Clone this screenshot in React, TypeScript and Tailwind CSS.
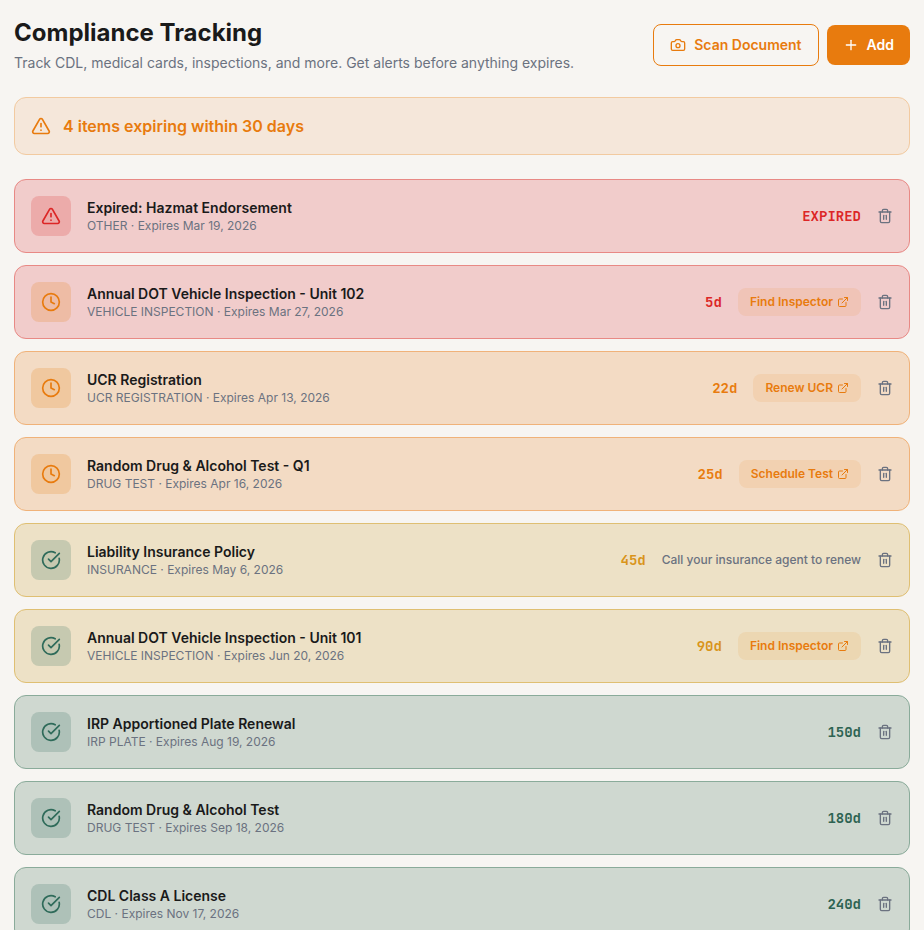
import { AlertTriangle, Camera, CircleCheckBig, Clock, ExternalLink, Plus, Trash2 } from "lucide-react";
import type { LucideIcon } from "lucide-react";

type Tone = "red" | "orange" | "yellow" | "green";
type Status = "expired" | "soon" | "ok";

interface ComplianceItem {
  title: string;
  category: string;
  expires: string;
  remaining: string;
  tone: Tone;
  status: Status;
  action?: string;
  note?: string;
}

const ITEMS: ComplianceItem[] = [
  { title: "Expired: Hazmat Endorsement", category: "OTHER", expires: "Mar 19, 2026", remaining: "EXPIRED", tone: "red", status: "expired" },
  { title: "Annual DOT Vehicle Inspection - Unit 102", category: "VEHICLE INSPECTION", expires: "Mar 27, 2026", remaining: "5d", tone: "red", status: "soon", action: "Find Inspector" },
  { title: "UCR Registration", category: "UCR REGISTRATION", expires: "Apr 13, 2026", remaining: "22d", tone: "orange", status: "soon", action: "Renew UCR" },
  { title: "Random Drug & Alcohol Test - Q1", category: "DRUG TEST", expires: "Apr 16, 2026", remaining: "25d", tone: "orange", status: "soon", action: "Schedule Test" },
  { title: "Liability Insurance Policy", category: "INSURANCE", expires: "May 6, 2026", remaining: "45d", tone: "yellow", status: "ok", note: "Call your insurance agent to renew" },
  { title: "Annual DOT Vehicle Inspection - Unit 101", category: "VEHICLE INSPECTION", expires: "Jun 20, 2026", remaining: "90d", tone: "yellow", status: "ok", action: "Find Inspector" },
  { title: "IRP Apportioned Plate Renewal", category: "IRP PLATE", expires: "Aug 19, 2026", remaining: "150d", tone: "green", status: "ok" },
  { title: "Random Drug & Alcohol Test", category: "DRUG TEST", expires: "Sep 18, 2026", remaining: "180d", tone: "green", status: "ok" },
  { title: "CDL Class A License", category: "CDL", expires: "Nov 17, 2026", remaining: "240d", tone: "green", status: "ok" },
];

const CARD_TONES: Record<Tone, string> = {
  red: "bg-[#f1cccb] border-[#e88985]",
  orange: "bg-[#f3dbc4] border-[#f0b279]",
  yellow: "bg-[#ede1c6] border-[#dfbf72]",
  green: "bg-[#cfd8d0] border-[#8aab9a]",
};

const TEXT_TONES: Record<Tone, string> = {
  red: "text-[#dc2626]",
  orange: "text-[#e87b0e]",
  yellow: "text-[#d9941a]",
  green: "text-[#2d6352]",
};

const STATUS_ICONS: Record<Status, { icon: LucideIcon; className: string }> = {
  expired: { icon: AlertTriangle, className: "bg-[#dc2626]/20 text-[#dc2626]" },
  soon: { icon: Clock, className: "bg-[#e87b0e]/20 text-[#e87b0e]" },
  ok: { icon: CircleCheckBig, className: "bg-[#2f6b5a]/20 text-[#2f6b5a]" },
};

function ComplianceRow({ item }: { item: ComplianceItem }) {
  const { icon: Icon, className } = STATUS_ICONS[item.status];

  return (
    <div className={`flex items-center gap-4 rounded-xl border p-4 ${CARD_TONES[item.tone]}`}>
      <div className={`flex h-10 w-10 shrink-0 items-center justify-center rounded-lg ${className}`}>
        <Icon className="h-5 w-5" />
      </div>
      <div className="min-w-0 flex-1">
        <p className="text-sm font-semibold text-[#1a1a1a]">{item.title}</p>
        <p className="text-xs text-[#6b7280]">
          {item.category} · Expires {item.expires}
        </p>
      </div>
      <span
        className={`font-['JetBrains_Mono','DejaVu_Sans_Mono',monospace] text-sm font-semibold ${TEXT_TONES[item.tone]}`}
      >
        {item.remaining}
      </span>
      {item.action && (
        <button className="flex items-center gap-1 rounded-lg bg-[#e87b0e]/10 px-3 py-1.5 text-xs font-semibold text-[#e87b0e]">
          {item.action}
          <ExternalLink className="h-3 w-3" />
        </button>
      )}
      {item.note && <span className="text-xs font-medium text-[#6b7280]">{item.note}</span>}
      <button className="text-[#6b7280]" aria-label="Delete">
        <Trash2 className="h-4 w-4" />
      </button>
    </div>
  );
}

export default function App() {
  return (
    <div className="h-screen overflow-hidden bg-[#f7f5f2] px-3.5 pt-[17px] font-['Inter',sans-serif]">
      {/* Header */}
      <div className="mb-6 flex items-center justify-between">
        <div>
          <h1 className="text-2xl font-bold text-[#1a1a1a]">Compliance Tracking</h1>
          <p className="mt-1 text-sm text-[#6b7280]">
            Track CDL, medical cards, inspections, and more. Get alerts before anything expires.
          </p>
        </div>
        <div className="flex items-center gap-2">
          <button className="flex items-center gap-2 rounded-lg border border-[#e87b0e] px-4 py-2.5 text-sm font-semibold text-[#e87b0e]">
            <Camera className="h-4 w-4" />
            Scan Document
          </button>
          <button className="flex items-center gap-2 rounded-lg bg-[#e87b0e] px-4 py-2.5 text-sm font-semibold text-white">
            <Plus className="h-4 w-4" />
            Add
          </button>
        </div>
      </div>

      {/* Expiring soon banner */}
      <div className="mb-6 flex items-center gap-3 rounded-xl border border-[#f2caa0] bg-[#f5e7da] p-4 text-[#e87b0e]">
        <AlertTriangle className="h-5 w-5" />
        <p className="font-semibold">4 items expiring within 30 days</p>
      </div>

      <div className="space-y-3">
        {ITEMS.map((item) => (
          <ComplianceRow key={item.title} item={item} />
        ))}
      </div>
    </div>
  );
}
